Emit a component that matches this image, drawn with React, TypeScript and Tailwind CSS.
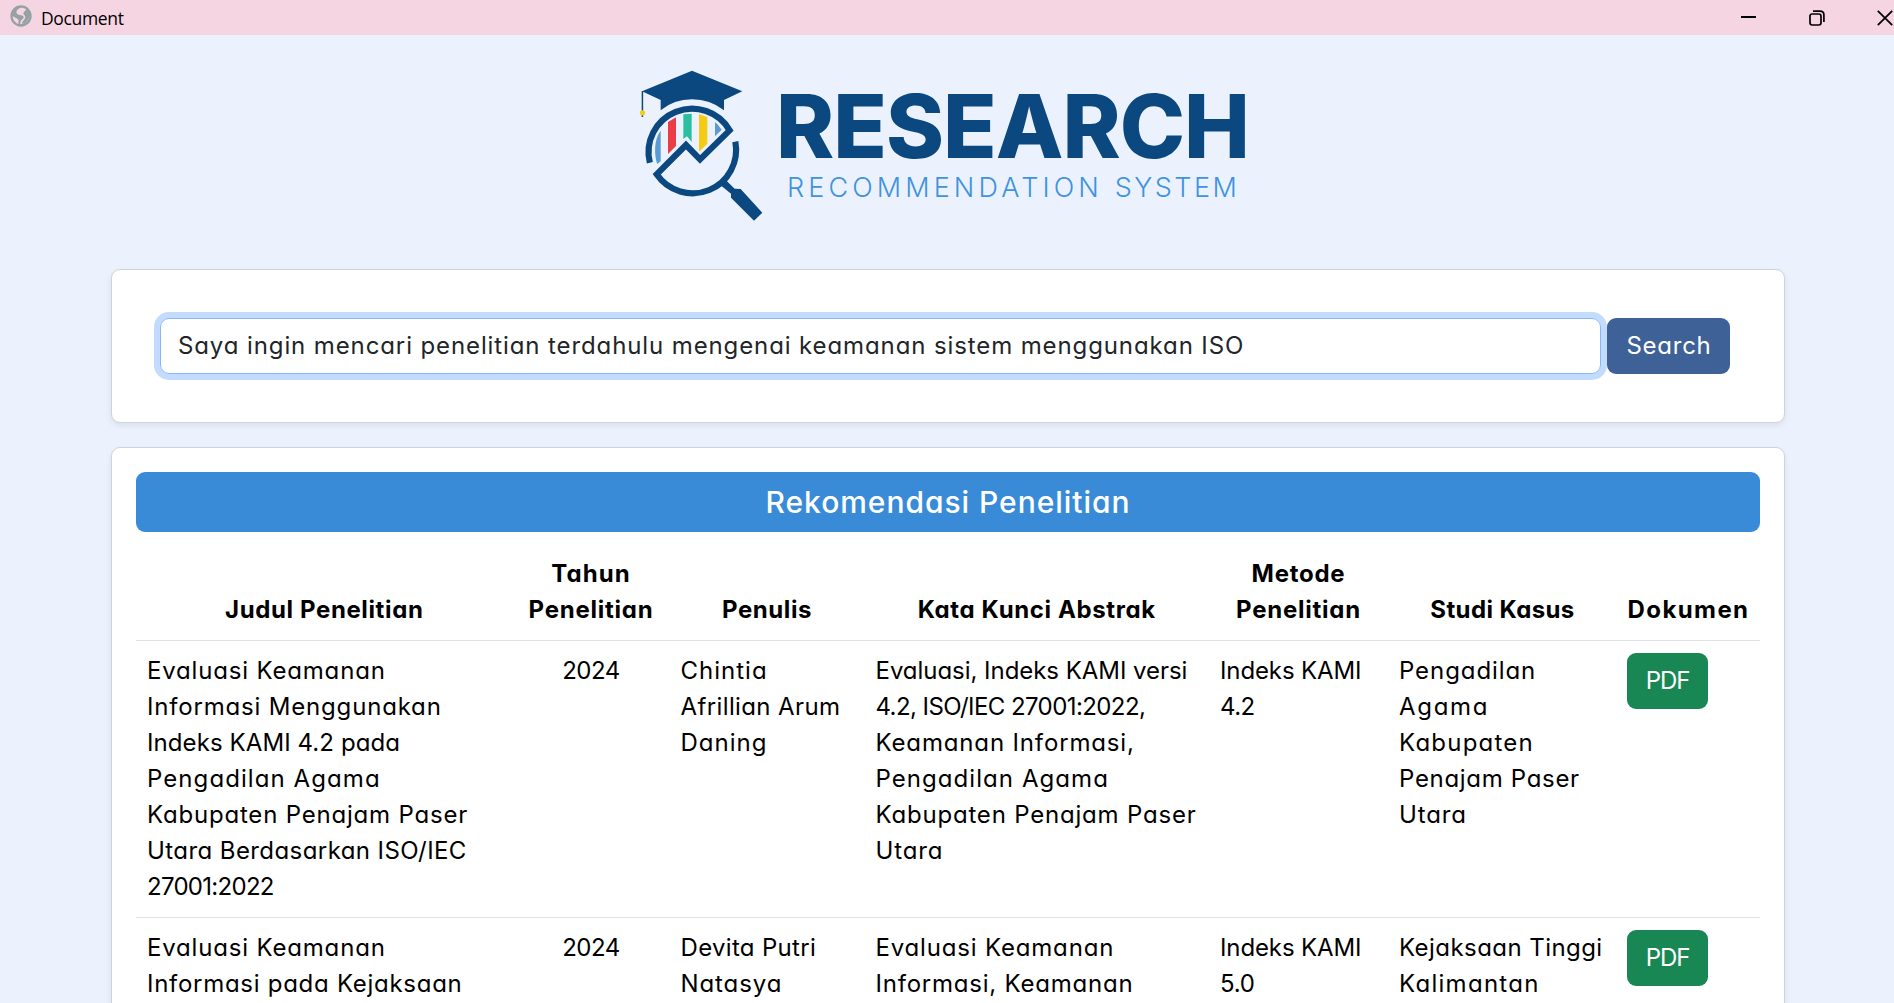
type Line = [text: string, tracking: string];

type Paper = {
  title: Line[];
  year: string;
  authors: Line[];
  keywords: Line[];
  method: Line[];
  study: Line[];
};

const papers: Paper[] = [
  {
    title: [
      ["Evaluasi Keamanan", "tracking-[0.82px]"],
      ["Informasi Menggunakan", "tracking-[0.82px]"],
      ["Indeks KAMI 4.2 pada", "tracking-[0.09px]"],
      ["Pengadilan Agama", "tracking-[1.08px]"],
      ["Kabupaten Penajam Paser", "tracking-[0.8px]"],
      ["Utara Berdasarkan ISO/IEC", "tracking-[0.42px]"],
      ["27001:2022", "tracking-[-0.71px]"],
    ],
    year: "2024",
    authors: [
      ["Chintia", "tracking-[1px]"],
      ["Afrillian Arum", "tracking-[0.38px]"],
      ["Daning", "tracking-[1px]"],
    ],
    keywords: [
      ["Evaluasi, Indeks KAMI versi", "tracking-[-0.04px]"],
      ["4.2, ISO/IEC 27001:2022,", "tracking-[-0.58px]"],
      ["Keamanan Informasi,", "tracking-[0.85px]"],
      ["Pengadilan Agama", "tracking-[1.06px]"],
      ["Kabupaten Penajam Paser", "tracking-[0.8px]"],
      ["Utara", "tracking-[0.85px]"],
    ],
    method: [
      ["Indeks KAMI", "tracking-[-0.12px]"],
      ["4.2", "tracking-[-0.5px]"],
    ],
    study: [
      ["Pengadilan", "tracking-[0.92px]"],
      ["Agama", "tracking-[1.7px]"],
      ["Kabupaten", "tracking-[1.22px]"],
      ["Penajam Paser", "tracking-[0.68px]"],
      ["Utara", "tracking-[0.85px]"],
    ],
  },
  {
    title: [
      ["Evaluasi Keamanan", "tracking-[0.82px]"],
      ["Informasi pada Kejaksaan", "tracking-[0.72px]"],
    ],
    year: "2024",
    authors: [
      ["Devita Putri", "tracking-[0.31px]"],
      ["Natasya", "tracking-[0.9px]"],
    ],
    keywords: [
      ["Evaluasi Keamanan", "tracking-[0.82px]"],
      ["Informasi, Keamanan", "tracking-[0.78px]"],
    ],
    method: [
      ["Indeks KAMI", "tracking-[-0.12px]"],
      ["5.0", "tracking-[-0.3px]"],
    ],
    study: [
      ["Kejaksaan Tinggi", "tracking-[0.44px]"],
      ["Kalimantan", "tracking-[1.28px]"],
    ],
  },
];

const headings: { lines: Line[]; width: string }[] = [
  { lines: [["Judul Penelitian", "tracking-[0.62px]"]], width: "w-[376.5px]" },
  {
    lines: [
      ["Tahun", "tracking-[1.11px]"],
      ["Penelitian", "tracking-[0.75px]"],
    ],
    width: "w-[157px]",
  },
  { lines: [["Penulis", "tracking-[0.58px]"]], width: "w-[195px]" },
  { lines: [["Kata Kunci Abstrak", "tracking-[0.62px]"]], width: "w-[344.5px]" },
  {
    lines: [
      ["Metode", "tracking-[0.75px]"],
      ["Penelitian", "tracking-[0.75px]"],
    ],
    width: "w-[179px]",
  },
  { lines: [["Studi Kasus", "tracking-[0.4px]"]], width: "w-[229px]" },
  { lines: [["Dokumen", "tracking-[1.4px]"]], width: "w-[143px]" },
];

function Lines({ lines }: { lines: Line[] }) {
  return (
    <>
      {lines.map(([text, tracking]) => (
        <span key={text} className={`block whitespace-nowrap ${tracking}`}>
          {text}
        </span>
      ))}
    </>
  );
}

function TitleBar() {
  return (
    <header className="flex h-[35px] items-center justify-between bg-[#f6d5e3] text-black">
      <div className="flex items-center gap-[9px] pl-[10px]">
        <svg className="-mt-[3px] size-[22px]" viewBox="30 16 66 66">
          <circle cx="63" cy="49" r="32" fill="#95a1a3" />
          <path
            d="M64 24 C54 26 46 34 51 42 C56 48 70 44 71 52 C72 58 62 60 62 66 L60 74 C75 73 86 64 88 50 L80 47 C74 46 68 40 74 35 L79 29 C75 26 69 24 64 24 Z"
            fill="#f6d5e3"
          />
          <path d="M72 38 L88 42 C90 56 82 68 66 73 C66 64 76 60 76 52 C76 46 66 44 72 38 Z" fill="#95a1a3" />
          <path d="M38 50 L50 56 L56 62 L55 73 C46 70 38 61 38 50 Z" fill="#f6d5e3" />
        </svg>
        <span className="pt-px font-['Open_Sans',sans-serif] text-[17.5px] leading-[34px] tracking-[-0.35px]">Document</span>
      </div>
      <div className="flex items-center gap-[52px] pr-px">
        <svg className="size-[16px]" viewBox="0 0 16 16" stroke="#000" strokeWidth="2">
          <path d="M0 7 H15" />
        </svg>
        <svg className="size-[16px]" viewBox="0 0 16 16" fill="none" stroke="#000" strokeWidth="1.7">
          <rect x="1" y="4" width="11" height="11" rx="2.2" />
          <path d="M4 1.2 H11 Q14.9 1.2 14.9 5 V12" />
        </svg>
        <svg className="size-[16px]" viewBox="0 0 16 16" stroke="#000" strokeWidth="1.8">
          <path d="M0.8 0.8 L15.2 15.2 M15.2 0.8 L0.8 15.2" />
        </svg>
      </div>
    </header>
  );
}

function LogoMark() {
  return (
    <svg className="h-[156px] w-[130px] shrink-0" viewBox="48 54 390 468">
      <g fill="#0c4880">
        <path d="M66 124 L216 62 L367 124 L312 150 V181 Q270 148 216 148 Q162 148 122 181 V150 Z" />
        <path d="M65 123 H69.5 V201 H65 Z" />
        <path d="M300 404 L318 391 L344 416 L362 417 L427 488 L402 512 L333 443 V431 Z" />
      </g>
      <circle cx="67.5" cy="188.500" r="8" fill="#f5cc14" />
      <path d="M122 242 C100 270 103 320 112 342 L122 334 Z" fill="#5b9bd3" />
      <path d="M144 216 L168 202 V288 L144 312 Z" fill="#ea3d46" />
      <path d="M190 193 L215 191 V276 L201 259 L190 267 Z" fill="#2bbfa0" />
      <path d="M237 192 L262 201 V281 L239 304 L237 300 Z" fill="#f5cc14" />
      <path d="M285 216 Q296 225 305 239 L285 259 Z" fill="#5b9bd3" />
      <path
        d="M89.500 338 A130.500 130.500 0 0 1 329 241 L240 328 L198 285 L110 373 A130.500 130.500 0 0 0 346 275"
        fill="none"
        stroke="#0c4880"
        strokeWidth="18.500"
        strokeMiterlimit="10"
      />
    </svg>
  );
}

function Brand() {
  return (
    <div className="mx-auto mt-[33px] flex w-[622px] items-start gap-[10px]">
      <LogoMark />
      <div className="pt-[26px] whitespace-nowrap">
        <h1 className="text-[88px] leading-[64px] font-extrabold tracking-[-1px] text-[#0c4880]">RESEARCH</h1>
        <p className="mt-[20px] ml-[11px] text-[27px] leading-[20px] font-light text-[#3f93df]">
          <span className="tracking-[4.12px]">RECOMMENDATION </span>
          <span className="tracking-[2.5px]">SYSTEM</span>
        </p>
      </div>
    </div>
  );
}

function SearchCard() {
  return (
    <section className="mt-[45px] flex h-[154px] gap-[6px] rounded-[9px] border border-[#d0d3d8] bg-white pt-[48px] pl-[48px] shadow-[0_3px_6px_rgba(0,0,0,0.075)]">
      <div className="flex h-[56px] w-[1441px] items-center rounded-[9px] border border-[#86b7fe] pl-[17px] whitespace-nowrap text-[#212529] shadow-[0_0_0_6px_#c2dbfe]">
        <span className="tracking-[0.89px]">
          Saya ingin mencari penelitian terdahulu mengenai keamanan sistem menggunakan ISO
        </span>
      </div>
      <button className="relative h-[56px] w-[123px] rounded-[9px] bg-[#3e6297] pl-px tracking-[0.75px] text-white">Search</button>
    </section>
  );
}

function ResultsTable() {
  return (
    <table className="mt-3 w-[1624px] table-fixed border-collapse text-left text-black">
      <thead>
        <tr className="border-b border-[#dee2e6]">
          {headings.map(({ lines, width }) => (
            <th key={lines[0][0]} className={`${width} py-3 text-center align-bottom font-bold`}>
              <Lines lines={lines} />
            </th>
          ))}
        </tr>
      </thead>
      <tbody>
        {papers.map((paper) => (
          <tr key={paper.authors[0][0]} className="border-b border-[#dee2e6] align-top">
            <td className="py-3 pl-[11px]">
              <Lines lines={paper.title} />
            </td>
            <td className="py-3 text-center tracking-[-0.45px]">{paper.year}</td>
            <td className="py-3 pl-[11px]">
              <Lines lines={paper.authors} />
            </td>
            <td className="py-3 pl-[11px]">
              <Lines lines={paper.keywords} />
            </td>
            <td className="py-3 pl-[11px]">
              <Lines lines={paper.method} />
            </td>
            <td className="py-3 pl-[11px]">
              <Lines lines={paper.study} />
            </td>
            <td className="py-3 pl-[10px]">
              <button className="block h-[56px] w-[81px] rounded-[9px] bg-[#198754] tracking-[-1.03px] text-white">PDF</button>
            </td>
          </tr>
        ))}
      </tbody>
    </table>
  );
}

export default function App() {
  return (
    <div className="h-screen overflow-hidden bg-[#ebf2fe] font-['Inter',sans-serif] text-[24px] leading-[36px] [font-feature-settings:'cv11']">
      <TitleBar />
      <Brand />
      <main className="ml-[111px] w-[1674px]">
        <SearchCard />
        <section className="mt-6 rounded-[9px] border border-[#d0d3d8] bg-white p-6 shadow-[0_3px_6px_rgba(0,0,0,0.075)]">
          <h2 className="h-[60px] rounded-[9px] bg-[#398bd8] text-center text-[30px] leading-[60px] font-medium tracking-[0.96px] text-white">
            Rekomendasi Penelitian
          </h2>
          <ResultsTable />
        </section>
      </main>
    </div>
  );
}
